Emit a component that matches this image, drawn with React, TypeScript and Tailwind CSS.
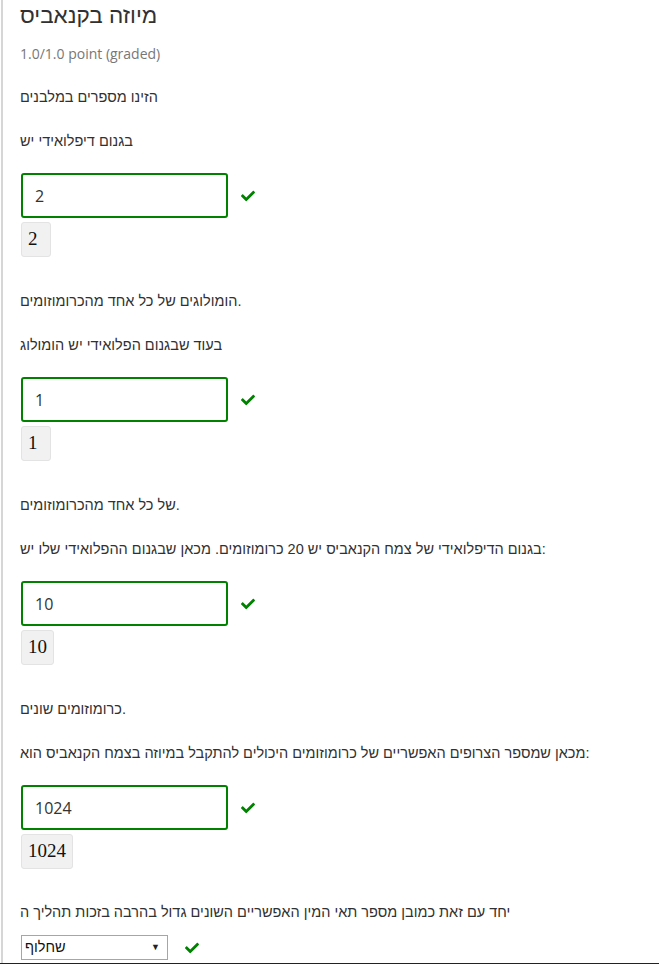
import React from "react";
import { FaCheck } from "react-icons/fa";

const heb = { fontFamily: '"Liberation Sans", "Open Sans", sans-serif' };
const os = { fontFamily: '"Open Sans", "Liberation Sans", sans-serif' };

function Check() {
  return <FaCheck className="text-[#008100] w-[16px] h-[14px] shrink-0" />;
}

function Input({ value }: { value: string }) {
  return (
    <div className="flex items-center mt-[22px] ml-px">
      <div className="w-[207px] h-[45px] border-2 border-[#008100] rounded-[3px] flex items-center pl-[12px] text-[16px] text-[#333]" style={os}>
        {value}
      </div>
      <div className="ml-[12px] flex items-center">
        <Check />
      </div>
    </div>
  );
}

function Preview({ value }: { value: string }) {
  return (
    <div className="ml-px mt-[4px] h-[35px] min-w-[30px] self-start bg-[#f1f1f1] border border-[#e3e3e3] rounded-[3px] flex items-center pl-[6px] pr-[6px] text-[19px] text-[#111]"
      style={{ fontFamily: '"Liberation Serif", "DejaVu Serif", serif' }}>
      {value}
    </div>
  );
}

function Line({ children, mt }: { children: React.ReactNode; mt: string }) {
  return <p className={`${mt} text-[14.5px] leading-[20px] text-[#313131]`} style={heb}>{children}</p>;
}

export default function App() {
  return (
    <div className="w-[659px] h-[964px] bg-white overflow-hidden">
      <div className="ml-px h-[963px] border-l-2 border-[#d6d6d6]">
        <div className="flex flex-col pl-[17px]">
          <h2 className="mt-[2px] text-[22.5px] leading-[28px] text-[#313131]" style={heb}>מיוזה בקנאביס</h2>
          <p className="mt-[14px] text-[14px] leading-[20px] text-[#777]" style={os}>1.0/1.0 point (graded)</p>
          <Line mt="mt-[23px]">הזינו מספרים במלבנים</Line>
          <Line mt="mt-[24px]">בגנום דיפלואידי יש</Line>
          <Input value="2" />
          <Preview value="2" />
          <Line mt="mt-[34px]">הומולוגים של כל אחד מהכרומוזומים.</Line>
          <Line mt="mt-[24px]">בעוד שבגנום הפלואידי יש הומולוג</Line>
          <Input value="1" />
          <Preview value="1" />
          <Line mt="mt-[34px]">של כל אחד מהכרומוזומים.</Line>
          <Line mt="mt-[24px]">בגנום הדיפלואידי של צמח הקנאביס יש 20 כרומוזומים. מכאן שבגנום ההפלואידי שלו יש:</Line>
          <Input value="10" />
          <Preview value="10" />
          <Line mt="mt-[34px]">כרומוזומים שונים.</Line>
          <Line mt="mt-[24px]">מכאן שמספר הצרופים האפשריים של כרומוזומים היכולים להתקבל במיוזה בצמח הקנאביס הוא:</Line>
          <Input value="1024" />
          <Preview value="1024" />
          <Line mt="mt-[33px]">יחד עם זאת כמובן מספר תאי המין האפשריים השונים גדול בהרבה בזכות תהליך ה</Line>
          <div className="flex items-center mt-[13px] ml-px">
            <div className="relative w-[147px] h-[25px] border border-[#a6a6a6] bg-white flex items-center pl-[3px] text-[14.5px] text-[#111]" style={heb}>
              שחלוף
              <span className="absolute right-[7px] top-[6px] text-[9px] leading-[10px] text-[#222]">▼</span>
            </div>
            <div className="ml-[16px] flex items-center">
              <Check />
            </div>
          </div>
        </div>
      </div>
      <div className="h-px bg-[#222]" />
    </div>
  );
}
